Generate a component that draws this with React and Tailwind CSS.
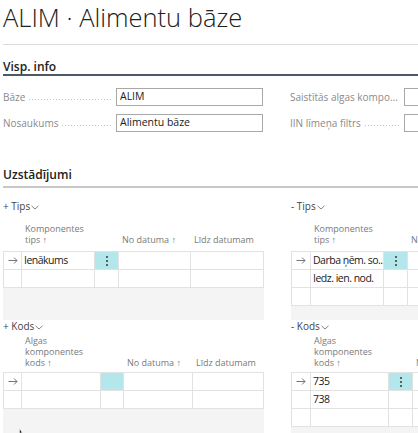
import React from "react";

function Chevron() {
  return (
    <svg width="8" height="5" viewBox="0 0 8 5" className="ml-[1px] mt-[1px]">
      <polyline points="0.5,0.8 4,4 7.5,0.8" fill="none" stroke="#666" strokeWidth="0.8" />
    </svg>
  );
}

function Arrow() {
  return (
    <svg width="10" height="7" viewBox="0 0 10 7">
      <line x1="0.5" y1="3.5" x2="9" y2="3.5" stroke="#666" strokeWidth="0.9" />
      <polyline points="6,0.5 9,3.5 6,6.5" fill="none" stroke="#666" strokeWidth="0.9" />
    </svg>
  );
}

function Dots() {
  return (
    <div className="flex flex-col items-center gap-[2px]">
      <span className="block w-[2px] h-[2px] bg-[#56655c]" />
      <span className="block w-[2px] h-[2px] bg-[#56655c]" />
      <span className="block w-[2px] h-[2px] bg-[#56655c]" />
    </div>
  );
}

function Field({ label, value, wide }) {
  return (
    <div className="flex h-[18px]">
      <div className={`${wide ? "w-[114px]" : "w-[113px]"} flex items-center pr-[3px]`}>
        <span className="text-[10px] text-[#8a8a8a] whitespace-nowrap">{label}</span>
        <div className="flex-1 h-px mt-[4px] ml-[4px] bg-[linear-gradient(to_right,#c4c4c4_1px,transparent_1px)] bg-[length:3px_1px] bg-repeat-x" />
      </div>
      <div className="w-[147px] h-[18px] shrink-0 border border-[#a8a8a8] flex items-center pl-[3px] text-[10.5px] text-[#212121] whitespace-nowrap">
        {value}
      </div>
    </div>
  );
}

function Toggle({ sign, title }) {
  return (
    <div className="h-[13px] leading-[13px] text-[10px] text-[#444] flex items-center whitespace-nowrap">
      <span>
        {sign} {title}
      </span>
      <Chevron />
    </div>
  );
}

function HeadCell({ w, lines }) {
  return (
    <div className={`${w} shrink-0 pl-[3px] text-[9px] leading-[11px] text-[#7a7a7a] whitespace-nowrap`}>
      {lines.map((l, i) => (
        <div key={i}>{l}</div>
      ))}
    </div>
  );
}

function Table({ cols, rows, dots, areaH }) {
  return (
    <div className={`${areaH} bg-[#f4f4f5]`}>
      <div className="border-t border-[#e2e2e2] w-max">
        {rows.map((r, ri) => (
          <div key={ri} className="flex h-[18px]">
            {cols.map((w, ci) => (
              <div
                key={ci}
                className={`${w} shrink-0 h-[18px] border-b border-r border-[#e2e2e2] flex items-center overflow-hidden ${
                  ci === 0 ? "border-l justify-center" : ""
                } ${ci === 2 ? "justify-center" : ""} ${
                  ri === 0 && ci === 2 ? "bg-[#b3e7ec]" : "bg-white"
                }`}
              >
                {ci === 0 && ri === 0 ? <Arrow /> : null}
                {ci === 1 ? (
                  <span className="pl-[2px] text-[10.5px] tracking-[-0.5px] text-[#212121] whitespace-nowrap">{r}</span>
                ) : null}
                {ci === 2 && ri === 0 && dots ? <Dots /> : null}
              </div>
            ))}
          </div>
        ))}
      </div>
    </div>
  );
}

export default function App() {
  const tipsL = ["w-[19px]", "w-[73px]", "w-[24px]", "w-[72px]", "w-[73px]"];
  const kodsL = ["w-[19px]", "w-[79px]", "w-[23px]", "w-[69px]", "w-[71px]"];
  const tipsR = ["w-[20px]", "w-[73px]", "w-[24px]", "w-[90px]", "w-[90px]"];
  const kodsR = ["w-[20px]", "w-[78px]", "w-[24px]", "w-[90px]", "w-[90px]"];

  return (
    <div className="relative w-[418px] h-[433px] overflow-hidden bg-white pl-[3px] font-['Open_Sans','Noto_Sans',sans-serif] text-[#212121]">
      <div className="pt-[2px] text-[25.5px] leading-[30px] font-light whitespace-nowrap">ALIM · Alimentu bāze</div>
      <div className="mt-[12px] h-px w-[600px] bg-[#dcdcdc]" />
      <div className="mt-[14px] w-[600px] text-[12px] leading-[15px] font-semibold border-b-2 border-[#4f5966]">
        Visp. info
      </div>

      <div className="mt-[12px] flex gap-[27px]">
        <div className="w-[260px] shrink-0 flex flex-col gap-[8px]">
          <Field label="Bāze" value="ALIM" />
          <Field label="Nosaukums" value="Alimentu bāze" />
        </div>
        <div className="w-[261px] shrink-0 flex flex-col gap-[8px]">
          <Field wide label="Saistītās algas kompo..." value="" />
          <Field wide label="IIN līmeņa filtrs" value="" />
        </div>
      </div>

      <div className="mt-[35px] w-[600px] text-[12px] leading-[15px] font-semibold pb-[4px] border-b-2 border-[#c8c8c8]">
        Uzstādījumi
      </div>

      <div className="mt-[12px] flex gap-[27px]">
        <div className="w-[261px] shrink-0">
          <Toggle sign="+" title="Tips" />
          <div className="mt-[10px] pb-[6px] flex items-end">
            <HeadCell w={tipsL[0]} lines={[]} />
            <HeadCell w={tipsL[1]} lines={["Komponentes", "tips ↑"]} />
            <HeadCell w={tipsL[2]} lines={[]} />
            <HeadCell w={tipsL[3]} lines={["No datuma ↑"]} />
            <HeadCell w={tipsL[4]} lines={["Līdz datumam"]} />
          </div>
          <Table cols={tipsL} rows={["Ienākums", ""]} dots areaH="h-[69px]" />

          <Toggle sign="+" title="Kods" />
          <div className="mt-[2px] pb-[4px] flex items-end">
            <HeadCell w={kodsL[0]} lines={[]} />
            <HeadCell w={kodsL[1]} lines={["Algas", "komponentes", "kods ↑"]} />
            <HeadCell w={kodsL[2]} lines={[]} />
            <HeadCell w={kodsL[3]} lines={["No datuma ↑"]} />
            <HeadCell w={kodsL[4]} lines={["Līdz datumam"]} />
          </div>
          <Table cols={kodsL} rows={["", ""]} areaH="h-[70px]" />
        </div>

        <div className="w-[300px] shrink-0">
          <Toggle sign="-" title="Tips" />
          <div className="mt-[10px] pb-[6px] flex items-end">
            <HeadCell w={tipsR[0]} lines={[]} />
            <HeadCell w={tipsR[1]} lines={["Komponentes", "tips ↑"]} />
            <HeadCell w={tipsR[2]} lines={[]} />
            <HeadCell w={tipsR[3]} lines={["No datuma ↑"]} />
          </div>
          <Table cols={tipsR} rows={["Darba ņēm. so...", "Iedz. ien. nod.", ""]} dots areaH="h-[69px]" />

          <Toggle sign="-" title="Kods" />
          <div className="mt-[2px] pb-[4px] flex items-end">
            <HeadCell w={kodsR[0]} lines={[]} />
            <HeadCell w={kodsR[1]} lines={["Algas", "komponentes", "kods ↑"]} />
            <HeadCell w={kodsR[2]} lines={[]} />
            <HeadCell w={kodsR[3]} lines={["No datuma ↑"]} />
          </div>
          <Table cols={kodsR} rows={["735", "738", ""]} dots areaH="h-[70px]" />
        </div>
      </div>

      <svg width="8" height="6" viewBox="0 0 8 6" className="absolute left-[19px] top-[428px]">
        <polygon points="0.5,0.5 0.5,6 2,4.5 4,6" fill="#111" stroke="#fff" strokeWidth="0.6" />
      </svg>
    </div>
  );
}
